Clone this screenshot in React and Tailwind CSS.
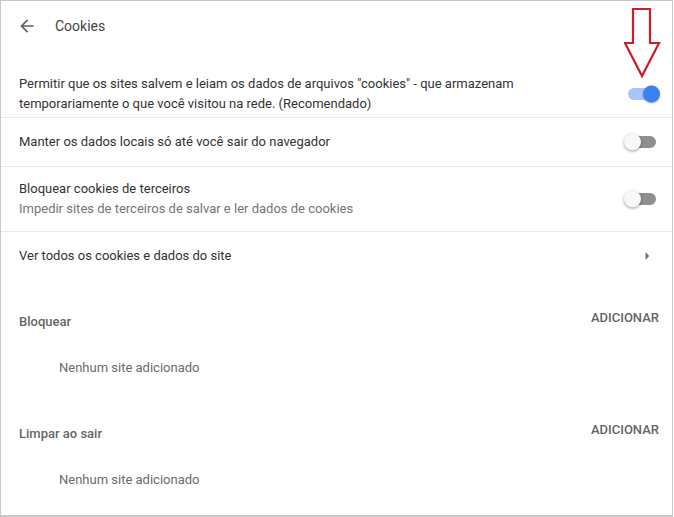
import React from 'react';

const Toggle = ({ on }) => (
  <div className="relative w-[34px] h-[14px] flex items-center">
    <div className={`w-[30px] h-[12px] ml-[2px] rounded-full ${on ? 'bg-[#a7c5f9]' : 'bg-[#8f8f8f]'}`} />
    <div
      className={`absolute top-1/2 -translate-y-1/2 w-[17px] h-[17px] rounded-full ${
        on ? 'right-0 bg-[#3b7ff0] shadow-[0_1px_2px_rgba(0,0,0,0.3)]' : 'left-0 bg-[#f8f8f8] shadow-[0_1px_3px_rgba(0,0,0,0.4)]'
      }`}
    />
  </div>
);

const AddSection = ({ title }) => (
  <div className="pl-[18px] pr-[13px] pt-[28px] pb-[14px]">
    <div className="flex items-start justify-between">
      <span className="mt-[4px] text-[#666] font-medium leading-5">{title}</span>
      <span className="text-[#62656a] font-medium leading-5">ADICIONAR</span>
    </div>
    <div className="mt-[26px] pl-[40px] text-[#6b6b6b] leading-5">Nenhum site adicionado</div>
  </div>
);

export default function App() {
  return (
    <div
      className="relative w-[673px] h-[517px] bg-white border-t border-l border-r border-b-2 border-[#c8c8c8] text-[13px] text-[#333]"
      style={{ fontFamily: 'Roboto, "Liberation Sans", sans-serif' }}
    >
      {/* header */}
      <div className="h-[49px] flex items-center pl-[16px]">
        <svg width="20" height="20" viewBox="0 0 24 24" className="fill-[#5f6368]">
          <path d="M20 11H7.83l5.59-5.59L12 4l-8 8 8 8 1.41-1.41L7.83 13H20v-2z" />
        </svg>
        <span className="ml-[18px] text-[14px] text-[#444] leading-5">Cookies</span>
      </div>

      <div className="flex items-center justify-between pl-[18px] pr-[12px] pt-[24px] pb-[3px] border-b border-[#e8e8e8]">
        <div className="leading-5">
          Permitir que os sites salvem e leiam os dados de arquivos "cookies" - que armazenam
          <br />
          temporariamente o que você visitou na rede. (Recomendado)
        </div>
        <Toggle on />
      </div>

      <div className="h-[49px] flex items-center justify-between pl-[18px] pr-[14px] border-b border-[#e8e8e8]">
        <span className="leading-5">Manter os dados locais só até você sair do navegador</span>
        <Toggle />
      </div>

      <div className="h-[65px] flex items-center justify-between pl-[18px] pr-[14px] border-b border-[#e8e8e8]">
        <div className="leading-5">
          <div>Bloquear cookies de terceiros</div>
          <div className="text-[#757575]">Impedir sites de terceiros de salvar e ler dados de cookies</div>
        </div>
        <Toggle />
      </div>

      <div className="h-[48px] flex items-center justify-between pl-[18px] pr-[16px]">
        <span className="leading-5">Ver todos os cookies e dados do site</span>
        <svg width="18" height="18" viewBox="0 0 24 24" className="fill-[#6e6e6e]">
          <path d="M10 17l5-5-5-5v10z" />
        </svg>
      </div>

      <AddSection title="Bloquear" />
      <AddSection title="Limpar ao sair" />

      {/* red annotation arrow */}
      <svg
        className="absolute left-[623px] top-[6px]"
        width="38"
        height="72"
        viewBox="0 0 38 72"
        fill="none"
      >
        <path
          d="M9 2 H26 V36 H35 L18 69 L1 36 H9 Z"
          stroke="#c8202a"
          strokeWidth="2.2"
          strokeLinejoin="miter"
        />
      </svg>
    </div>
  );
}
